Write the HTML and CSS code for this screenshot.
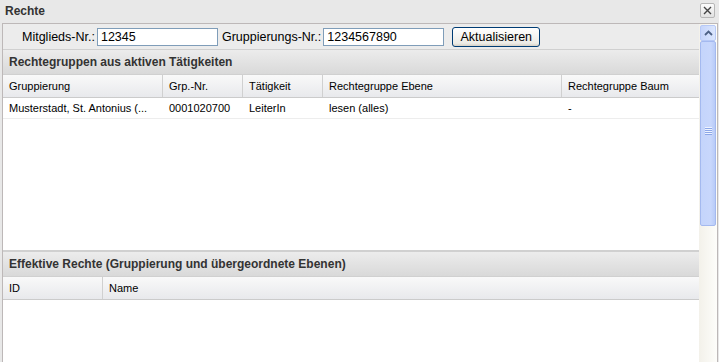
FILE: index.html
```html
<!DOCTYPE html>
<html lang="de">
<head>
    <meta charset="UTF-8">
    <title>Rechte</title>
    <link rel="stylesheet" href="styles.css">
</head>
<body>
    <div class="window">
        <header class="titlebar">
            <span class="title">Rechte</span>
            <button class="close" title="Schließen">
                <svg width="9" height="9" viewBox="0 0 9 9"><path d="M1 1L8 8M8 1L1 8" stroke="#444" stroke-width="1.4"/></svg>
            </button>
        </header>

        <div class="body">
            <div class="content">
                <div class="toolbar">
                    <label>Mitglieds-Nr.:</label>
                    <input type="text" value="12345">
                    <label>Gruppierungs-Nr.:</label>
                    <input type="text" value="1234567890">
                    <button class="btn">Aktualisieren</button>
                </div>

                <section class="panel panel-top">
                    <div class="panel-header">Rechtegruppen aus aktiven Tätigkeiten</div>
                    <div class="grid">
                        <div class="grid-head cols-5">
                            <div>Gruppierung</div>
                            <div>Grp.-Nr.</div>
                            <div>Tätigkeit</div>
                            <div>Rechtegruppe Ebene</div>
                            <div>Rechtegruppe Baum</div>
                        </div>
                        <div class="grid-row cols-5">
                            <div>Musterstadt, St. Antonius (...</div>
                            <div>0001020700</div>
                            <div>LeiterIn</div>
                            <div>lesen (alles)</div>
                            <div>-</div>
                        </div>
                    </div>
                </section>

                <section class="panel">
                    <div class="panel-header">Effektive Rechte (Gruppierung und übergeordnete Ebenen)</div>
                    <div class="grid">
                        <div class="grid-head cols-2">
                            <div>ID</div>
                            <div>Name</div>
                        </div>
                    </div>
                </section>
            </div>

            <div class="scrollbar">
                <div class="sb-up">
                    <svg width="9" height="6" viewBox="0 0 9 6"><path d="M1 5L4.5 1.5L8 5" fill="none" stroke="#4d6185" stroke-width="1.8"/></svg>
                </div>
                <div class="sb-thumb"><span class="grip"></span></div>
                <div class="sb-track"></div>
            </div>
        </div>
    </div>
</body>
</html>
```

FILE: styles.css
```css
body {
    margin: 0;
    font-family: "Liberation Sans", Arial, sans-serif;
    font-size: 11px;
    color: #000;
    background-color: #e8e8e8;
    overflow: hidden;
}

.window {
    width: 719px;
    height: 362px;
    display: flex;
    flex-direction: column;
    background-color: #e8e8e8;
}

.titlebar {
    height: 23px;
    display: flex;
    align-items: center;
    justify-content: space-between;
    padding: 0 4px 0 5px;
    box-sizing: border-box;
}

.title {
    font-weight: bold;
    font-size: 12px;
    color: #333;
    margin-top: -2px;
}

.close {
    width: 15px;
    height: 15px;
    padding: 0;
    margin-top: -3px;
    border: 1px solid #b7b7b7;
    border-radius: 2px;
    background: linear-gradient(#fbfbfb, #e2e2e2);
    display: flex;
    align-items: center;
    justify-content: center;
}

.body {
    flex: 1;
    display: flex;
    margin-left: 2px;
    margin-right: 1px;
    border-top: 1px solid #bdb8b8;
    border-left: 1px solid #bdb8b8;
    border-right: 1px solid #bdb8b8;
    min-height: 0;
}

.content {
    flex: 1;
    display: flex;
    flex-direction: column;
    min-width: 0;
}

.toolbar {
    height: 26px;
    display: flex;
    align-items: center;
    padding-left: 19px;
    font-size: 12.5px;
    background-color: #ececec;
    border-bottom: 1px solid #d0d0d0;
    box-sizing: border-box;
}

.toolbar label {
    margin-right: 2px;
    padding-top: 1px;
}

.toolbar input {
    width: 121px;
    height: 18px;
    box-sizing: border-box;
    padding: 0 3px;
    margin: 0 4px 0 0;
    border: 1px solid #7f9db9;
    font-family: inherit;
    font-size: 12.5px;
    background: #fff;
}

.btn {
    margin-left: 4px;
    height: 20px;
    width: 88px;
    padding: 0;
    border: 1px solid #003c74;
    border-radius: 3px;
    background: linear-gradient(#ffffff, #ecebe6 85%, #d6d0c5);
    font-family: inherit;
    font-size: 12.5px;
    color: #000;
}

.panel {
    display: flex;
    flex-direction: column;
    background-color: #fff;
}

.panel-top {
    height: 200px;
    border-bottom: 2px solid #d0d0d0;
}

.panel + .panel {
    flex: 1;
}

.panel-header {
    height: 25px;
    line-height: 24px;
    padding-left: 6px;
    font-weight: bold;
    font-size: 12px;
    color: #333;
    background: linear-gradient(#ececec, #d9d9d9);
    border-bottom: 1px solid #d0d0d0;
    box-sizing: border-box;
}

.grid-head,
.grid-row {
    display: grid;
}

.cols-5 {
    grid-template-columns: 160px 80px 80px 239px 1fr;
}

.cols-2 {
    grid-template-columns: 100px 1fr;
}

.grid-head {
    height: 23px;
    background: linear-gradient(#f9f9f9, #e8e9ec);
    border-bottom: 1px solid #cbcbcb;
    box-sizing: border-box;
}

.grid-head div {
    line-height: 22px;
    padding-left: 6px;
    border-right: 1px solid #d0d0d0;
    white-space: nowrap;
    overflow: hidden;
}

.grid-head div:last-child {
    border-right: none;
}

.grid-row {
    height: 21px;
    border-bottom: 1px solid #ededed;
    box-sizing: border-box;
}

.grid-row div {
    line-height: 20px;
    padding-left: 6px;
    white-space: nowrap;
    overflow: hidden;
}

.scrollbar {
    width: 18px;
    display: flex;
    flex-direction: column;
    background: linear-gradient(90deg, #f3f1ea, #fdfdfa);
    padding-left: 1px;
    box-sizing: border-box;
}

.sb-up {
    height: 16px;
    margin: 1px 1px 0 0;
    border: 1px solid #b7c9f6;
    border-radius: 2px;
    background: linear-gradient(90deg, #c6d5fb, #dbe6fd);
    display: flex;
    align-items: center;
    justify-content: center;
    box-sizing: border-box;
}

.sb-thumb {
    height: 185px;
    margin-right: 1px;
    border: 1px solid #a4b9ef;
    border-radius: 2px;
    background: linear-gradient(90deg, #c4d4fb, #c8d7fc 70%, #b8cbf8);
    display: flex;
    align-items: center;
    justify-content: center;
    box-sizing: border-box;
}

.grip {
    width: 7px;
    height: 8px;
    margin-top: -6px;
    background: repeating-linear-gradient(#eef3ff 0 1px, #8ca7e8 1px 2px);
}

.sb-track {
    flex: 1;
}
```
